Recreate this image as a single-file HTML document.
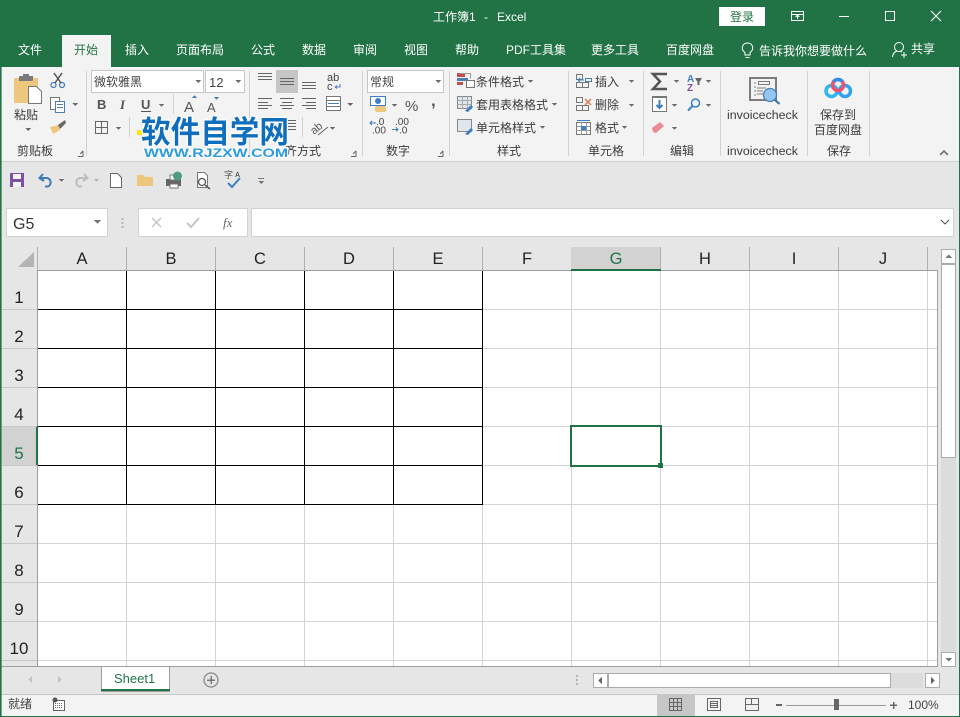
<!DOCTYPE html>
<html><head><meta charset="utf-8"><style>
html,body{margin:0;padding:0;background:#fff;width:960px;height:717px;overflow:hidden}
svg{display:block}
text{font-family:"Liberation Sans","Noto Sans CJK SC",sans-serif;font-size:12px;fill:#3c3c3c}
.t{fill:#fff}
.g{stroke:#d4d4d4;stroke-width:1;fill:none}
.b{stroke:#000;stroke-width:1;fill:none}
.sep{stroke:#d2d2d2;stroke-width:1;fill:none}
.ar{fill:#6a6a6a}
.hd{font-size:16.500px;fill:#222;text-anchor:middle}
.rh{font-size:17px;fill:#222;text-anchor:middle}
.ln{stroke:#666;stroke-width:1;fill:none}
</style></head><body>
<svg width="960" height="717" viewBox="0 0 960 717" xmlns="http://www.w3.org/2000/svg" shape-rendering="crispEdges">
<!-- base -->
<rect width="960" height="717" fill="#e6e6e6"/>
<rect width="960" height="67" fill="#217346"/>
<rect x="0" y="67" width="960" height="94" fill="#f3f3f3"/>
<rect x="0" y="161" width="960" height="1" fill="#d0d0d0"/>
<!-- titlebar -->
<text class="t" x="433" y="21" style="font-size:12px">工作簿1</text>
<text class="t" x="484" y="21">-</text>
<text class="t" x="497" y="21" style="font-size:12px">Excel</text>
<rect x="719" y="7" width="46" height="19" fill="#fff"/>
<text x="742" y="21" text-anchor="middle" style="fill:#217346;font-size:12px">登录</text>
<g fill="none" stroke="#fff" stroke-width="1">
<rect x="791.500" y="11.500" width="12" height="9"/><path d="M792 14.500h11M797.500 19v-3M795.500 17l2-2 2 2"/>
<path d="M839 16.500h10"/><rect x="885.500" y="11.500" width="9" height="9"/>
<path d="M931 11l10 10M941 11l-10 10" shape-rendering="geometricPrecision"/>
</g>
<!-- tabs -->
<rect x="62" y="35" width="49" height="32" fill="#f3f3f3"/>
<g style="font-size:12px">
<text class="t" x="18" y="54">文件</text>
<text x="74" y="54" style="fill:#217346">开始</text>
<text class="t" x="125" y="54">插入</text>
<text class="t" x="176" y="54">页面布局</text>
<text class="t" x="251" y="54">公式</text>
<text class="t" x="302" y="54">数据</text>
<text class="t" x="353" y="54">审阅</text>
<text class="t" x="404" y="54">视图</text>
<text class="t" x="455" y="54">帮助</text>
<text class="t" x="506" y="54">PDF工具集</text>
<text class="t" x="591" y="54">更多工具</text>
<text class="t" x="666" y="54">百度网盘</text>
<text class="t" x="759" y="55">告诉我你想要做什么</text>
<text class="t" x="911" y="53">共享</text>
</g>
<g fill="none" stroke="#fff" stroke-width="1" shape-rendering="geometricPrecision">
<path d="M745 55v-2.500c-5-3.500-2.500-9.500 2.500-9.500s7.500 6 2.500 9.500v2.500zM745.500 57.500h4"/>
<circle cx="899" cy="47" r="4.500"/><path d="M892.500 57c.5-4 3-5.500 4.500-6M900 51l2 1M901 55h6M904 52v6"/>
</g>
<!-- separators -->
<path class="sep" d="M86.500 71v85M249.500 71v85M362.500 71v85M449.500 71v85M568.500 71v85M643.500 71v85M720.500 71v85M807.500 71v85M869.500 71v85M173.500 94v20"/>
<!-- clipboard -->
<g>
<rect x="14" y="78" width="24" height="25" rx="1" fill="#eec77f"/>
<rect x="19" y="76" width="14" height="5" rx="1" fill="#7a7a7a"/><rect x="23" y="74" width="6" height="3" fill="#7a7a7a"/>
<path d="M28.500 86.500h8l5 5v12h-13z" fill="#fff" stroke="#777"/>
<text x="14" y="119">粘贴</text>
<path class="ar" d="M25 128h6l-3 3z"/>
<text x="17" y="155">剪贴板</text>
<g fill="none" stroke="#4a7fb5" stroke-width="1.300" shape-rendering="geometricPrecision">
<circle cx="53.500" cy="85" r="2.500"/><circle cx="62" cy="85" r="2.500"/></g>
<path d="M55 83l7-10M61 83l-7-10" stroke="#555" stroke-width="1.500" fill="none" shape-rendering="geometricPrecision"/>
<rect x="50.500" y="97.500" width="9" height="12" fill="#fff" stroke="#777"/>
<rect x="55.500" y="101.500" width="9" height="11" fill="#fff" stroke="#4a7fb5"/>
<path d="M57 104.500h6M57 107.500h6" stroke="#4a7fb5"/>
<path class="ar" d="M72 103h6l-3 3z"/>
<path d="M50 127l8-2 2 5-7 4z" fill="#eec77f" shape-rendering="geometricPrecision"/>
<path d="M58 125l7-5 1 3-6 6z" fill="#666" shape-rendering="geometricPrecision"/>
<path class="ln" d="M78 156.500h5v-5M80 154l3-3" stroke="#888"/>
</g>
<!-- font -->
<rect x="91.500" y="70.500" width="112" height="22" fill="#fff" stroke="#c6c6c6"/>
<rect x="205.500" y="70.500" width="39" height="22" fill="#fff" stroke="#c6c6c6"/>
<text x="94" y="86" style="font-size:12px;fill:#444">微软雅黑</text>
<text x="209" y="87" style="font-size:13px;fill:#444">12</text>
<path class="ar" d="M195 80h6l-3 3zM235 80h6l-3 3zM159 104h5l-2.500 3z"/>
<text x="97" y="109" style="font-weight:bold;font-size:13px;fill:#555">B</text>
<text x="120" y="109" style="font-style:italic;font-family:'Liberation Serif',serif;font-weight:bold;font-size:13px;fill:#555">I</text>
<text x="141" y="109" style="font-weight:bold;font-size:13px;fill:#555">U</text>
<rect x="141" y="111" width="10" height="1" fill="#555"/>
<text x="184" y="112" style="font-size:15px;fill:#555">A</text><path d="M192 98h5l-2.500-3z" fill="#4a7fb5"/>
<text x="207" y="112" style="font-size:13px;fill:#555">A</text><path d="M214 97h5l-2.500 3z" fill="#4a7fb5"/>
<path d="M95.500 121.500h12v12h-12zM101.500 121.500v12M95.500 127.500h12" fill="none" stroke="#666"/>
<path class="ar" d="M116 127h5l-2.500 3z"/>
<path class="sep" d="M129.500 117v20"/>
<rect x="137" y="130" width="5" height="5" fill="#ffe600"/>
<!-- alignment -->
<rect x="276" y="70" width="22" height="23" fill="#c6c6c6"/>
<path class="ln" d="M258 73.500h14M258 76.500h14M258 79.500h14M280 78.500h14M280 81.500h14M280 84.500h14M302 82.500h14M302 85.500h14M302 88.500h14"/>
<path class="ln" d="M258 98.500h14M258 102.500h10M258 105.500h14M258 108.500h10M280 98.500h14M282 102.500h10M280 105.500h14M282 108.500h10M302 98.500h14M306 102.500h10M302 105.500h14M306 108.500h10"/>
<text x="327" y="81" style="font-size:11px;fill:#444">ab</text><text x="327" y="90" style="font-size:11px;fill:#444">c</text>
<path d="M335 87h5v-3M335 87l2-1.500M335 87l2 1.500" fill="none" stroke="#4a7fb5" shape-rendering="geometricPrecision"/>
<rect x="326.500" y="96.500" width="14" height="14" fill="#fff" stroke="#777"/><path d="M328 103.500h11" stroke="#4a7fb5"/><path d="M326.500 100.500h14M326.500 106.500h14" stroke="#777"/>
<path class="ar" d="M347 103h6l-3 3z"/>
<path class="ln" d="M288 120.500h8M288 123.500h8M288 126.500h8M288 129.500h8"/>
<path class="sep" d="M302.500 117v20"/>
<text x="310" y="132" transform="rotate(-40 316 128)" style="font-size:11px;fill:#555">ab</text>
<path d="M318 135l10-8" stroke="#666" fill="none" shape-rendering="geometricPrecision"/>
<path class="ar" d="M330 127h5l-2.500 3z"/>
<text x="285" y="155">齐方式</text>
<path class="ln" d="M351 156.500h5v-5M353 154l3-3" stroke="#888"/>
<!-- number -->
<rect x="367.500" y="70.500" width="76" height="22" fill="#fff" stroke="#c6c6c6"/>
<text x="370" y="86" style="font-size:12px;fill:#444">常规</text>
<path class="ar" d="M435 80h6l-3 3z"/>
<rect x="370.500" y="96.500" width="15" height="9" fill="#fff" stroke="#3b7fc4"/>
<circle cx="378" cy="101" r="3" fill="#3b7fc4" shape-rendering="geometricPrecision"/>
<rect x="375" y="106" width="11" height="6" rx="2" fill="#eec77f"/>
<path class="ar" d="M392 104h5l-2.500 3z"/>
<text x="405" y="111" style="font-size:15px;fill:#555">%</text>
<text x="431" y="106" style="font-size:17px;font-weight:bold;fill:#555">,</text>
<text x="376" y="125" style="font-size:10px;fill:#444">.0</text><text x="372" y="133.500" style="font-size:10px;fill:#444">.00</text>
<path d="M370 123h6M372 121l-2 2 2 2" stroke="#3b7fc4" fill="none"/>
<text x="395" y="125" style="font-size:10px;fill:#444">.00</text><text x="399" y="133.500" style="font-size:10px;fill:#444">.0</text>
<path d="M392 129.500h6M396 127.500l2 2-2 2" stroke="#3b7fc4" fill="none"/>
<text x="386" y="155">数字</text>
<path class="ln" d="M438 156.500h5v-5M440 154l3-3" stroke="#888"/>
<!-- styles -->
<rect x="457" y="73" width="8" height="4" fill="#c0504d"/><rect x="457" y="78" width="11" height="3" fill="#4a7fb5"/><rect x="457" y="82" width="6" height="3" fill="#c0504d"/>
<rect x="466.500" y="80.500" width="8" height="7" fill="#fff" stroke="#777"/><path d="M459.500 73.500h11v5" fill="none" stroke="#999"/>
<g><rect x="457.500" y="96.500" width="14" height="12" fill="#dfe6ee" stroke="#888"/><path d="M457.500 100.500h14M457.500 104.500h14M462.500 96.500v12M467.500 96.500v12" stroke="#aaa"/><path d="M465 111l6-6 2 2-5 5z" fill="#3b7fc4" shape-rendering="geometricPrecision"/></g>
<g><rect x="457.500" y="119.500" width="14" height="12" fill="#dfe6ee" stroke="#888"/><path d="M465 134l6-6 2 2-5 5z" fill="#3b7fc4" shape-rendering="geometricPrecision"/></g>
<text x="476" y="86">条件格式</text><path class="ar" d="M528 80h5l-2.500 3z"/>
<text x="476" y="109">套用表格格式</text><path class="ar" d="M552 103h5l-2.500 3z"/>
<text x="476" y="132">单元格样式</text><path class="ar" d="M540 126h5l-2.500 3z"/>
<text x="497" y="155">样式</text>
<!-- cells -->
<path d="M576.500 74.500h6v5h-6zM576.500 82.500h6v5h-6zM582.500 82.500h6v5h-6z" fill="none" stroke="#777"/>
<rect x="585.500" y="78.500" width="6" height="3" fill="none" stroke="#4a7fb5"/><path d="M578 80h6M580 78l-2 2 2 2" stroke="#3b7fc4" fill="none"/>
<path d="M576.500 97.500h6v5h-6zM576.500 105.500h6v5h-6zM582.500 105.500h6v5h-6z" fill="none" stroke="#777"/>
<path d="M585 99l6 6M591 99l-6 6" stroke="#e07b53" stroke-width="1.500" shape-rendering="geometricPrecision"/>
<rect x="576.500" y="122.500" width="14" height="12" fill="#fff" stroke="#777"/><path d="M576.500 126.500h14M576.500 130.500h14M581.500 122.500v12M586.500 122.500v12" stroke="#999"/><rect x="581" y="126" width="5" height="4" fill="#3b7fc4"/>
<path d="M577 120.500h13" stroke="#3b7fc4"/>
<text x="595" y="86">插入</text><path class="ar" d="M629 80h5l-2.500 3z"/>
<text x="595" y="109">删除</text><path class="ar" d="M629 104h5l-2.500 3z"/>
<text x="595" y="132">格式</text><path class="ar" d="M622 126h5l-2.500 3z"/>
<text x="588" y="155">单元格</text>
<!-- editing -->
<path d="M667 74h-14l7 7.500-7 7.500h14" fill="none" stroke="#555" stroke-width="2.500" shape-rendering="geometricPrecision"/>
<path class="ar" d="M674 80h5l-2.500 3zM672 104h5l-2.500 3zM672 127h5l-2.500 3zM706 80h5l-2.500 3zM706 104h5l-2.500 3z"/>
<text x="687" y="82" style="font-size:10px;font-weight:bold;fill:#3b7fc4">A</text><text x="687" y="91" style="font-size:10px;font-weight:bold;fill:#7a4fa5">Z</text>
<path d="M695 78h7l-2.500 4v3h-2v-3z" fill="#666"/>
<rect x="652.500" y="96.500" width="14" height="15" fill="#fff" stroke="#777"/><rect x="652" y="96" width="15" height="2" fill="#777"/>
<path d="M659.500 100v8M656.500 105l3 3 3-3" stroke="#3b7fc4" stroke-width="2" fill="none" shape-rendering="geometricPrecision"/>
<g fill="none" stroke="#3b7fc4" stroke-width="1.500" shape-rendering="geometricPrecision"><circle cx="695.500" cy="103" r="4"/><path d="M692.500 106l-4.500 4.500" stroke-width="2"/></g>
<path d="M652 128l8-6 4 4-8 7-3-1z" fill="#e98a96" shape-rendering="geometricPrecision"/>
<text x="670" y="155">编辑</text>
<!-- invoice -->
<rect x="750" y="78" width="26" height="22" fill="#f3f3f3" stroke="#7c7c7c" stroke-width="2"/>
<path d="M755 82v15" stroke="#7c7c7c" stroke-dasharray="2 2"/>
<rect x="758.500" y="81.500" width="11" height="3" fill="none" stroke="#7c7c7c"/><path d="M757 88h9M757 91h6M757 94h7" stroke="#7c7c7c"/>
<g shape-rendering="geometricPrecision"><circle cx="770" cy="95" r="6.500" fill="#94c6f3" stroke="#4a7fb5" stroke-width="1.300"/><path d="M775 100l4.500 4" stroke="#3b6f9f" stroke-width="2"/></g>
<text x="727" y="119" style="font-size:12.400px">invoicecheck</text>
<text x="727" y="155" style="font-size:12.400px">invoicecheck</text>
<!-- baidu -->
<g fill="none" stroke-width="3.500" shape-rendering="geometricPrecision">
<circle cx="831.500" cy="91" r="5.500" stroke="#2fb6ef"/><circle cx="845" cy="91" r="5.500" stroke="#2fa3ef"/><circle cx="838" cy="85" r="5.500" stroke="#f0506e"/>
<path d="M833.500 81.500a6 6 0 0 1 9 0" stroke="#2f8fe0"/></g>
<text x="820" y="119">保存到</text>
<text x="814" y="134">百度网盘</text>
<text x="827" y="155">保存</text>
<path d="M940 155l4-4 4 4" stroke="#777" stroke-width="1.500" fill="none"/>
<!-- QAT -->
<rect x="10" y="173" width="14" height="14" fill="#7d4fa5"/><rect x="13" y="174" width="8" height="5" fill="#f3f3f3"/><rect x="13" y="182" width="8" height="5" fill="#f3f3f3"/>
<g fill="none" shape-rendering="geometricPrecision">
<path d="M43 174l-3.500 4 4.500 3M40 178h7a4.500 4.500 0 0 1 1 8.500h-3" stroke="#3f7ab8" stroke-width="2"/>
<path d="M84 174l3.500 4-4.500 3M87 178h-7a4.500 4.500 0 0 0-1 8.500h3" stroke="#bcbcbc" stroke-width="2"/></g>
<path class="ar" d="M59 179h5l-2.500 3z"/><path d="M94 179h5l-2.500 3z" fill="#b5b5b5"/>
<path d="M110.500 173.500h7l4 4v10h-11z" fill="#fff" stroke="#666"/>
<path d="M137 175h6l2 2h8v9h-16z" fill="#eec77f"/>
<rect x="166" y="179" width="15" height="7" fill="#666"/><rect x="170" y="175" width="8" height="5" fill="#fff" stroke="#777"/><rect x="170" y="184" width="8" height="4" fill="#fff" stroke="#777"/>
<circle cx="177.500" cy="176" r="4.500" fill="#4d9a86" shape-rendering="geometricPrecision"/>
<path d="M197.500 172.500h7l3 3v12h-10z" fill="#fff" stroke="#777"/>
<g shape-rendering="geometricPrecision" fill="none"><circle cx="202" cy="182" r="3.500" stroke="#555" stroke-width="1.300"/><path d="M205 185l5 4" stroke="#555" stroke-width="1.500"/><path d="M228 183l4 4 8-9" stroke="#3b7fc4" stroke-width="2"/></g>
<text x="224" y="178" style="font-size:9px;fill:#555">字</text><text x="235" y="177" style="font-size:7px;fill:#555;font-weight:bold">A</text>
<rect x="258" y="178" width="6" height="1" fill="#777"/><path d="M258 181h6l-3 3z" fill="#777"/>
<!-- formula bar -->
<rect x="6.500" y="208.500" width="101" height="28" fill="#fff" stroke="#d2d2d2"/>
<text x="13" y="229" style="font-size:16px;fill:#333">G5</text>
<path d="M94 220h7l-3.500 4z" fill="#777"/>
<path d="M122.500 218v2M122.500 222v2M122.500 226v2" stroke="#b5b5b5" stroke-width="2"/>
<rect x="138.500" y="208.500" width="109" height="28" fill="#fff" stroke="#d2d2d2"/>
<rect x="251.500" y="208.500" width="702" height="28" fill="#fff" stroke="#d2d2d2"/>
<path d="M152 218l9 9M161 218l-9 9" stroke="#c6c6c6" stroke-width="1.500" fill="none" shape-rendering="geometricPrecision"/>
<path d="M187 223l4 4 8-9" stroke="#c6c6c6" stroke-width="2" fill="none" shape-rendering="geometricPrecision"/>
<text x="223" y="227" style="font-family:'Liberation Serif',serif;font-style:italic;font-size:13px;fill:#666">fx</text>
<path d="M941 220l4 4 4-4" stroke="#555" fill="none" stroke-width="1.300"/>
<!-- sheet -->
<rect x="37" y="270" width="900" height="396" fill="#fff"/>
<path class="g" d="M126.500 270v396M215.500 270v396M304.500 270v396M393.500 270v396M482.500 270v396M571.500 270v396M660.500 270v396M749.500 270v396M838.500 270v396M927.500 270v396"/>
<path class="g" d="M37 309.500h900M37 348.500h900M37 387.500h900M37 426.500h900M37 465.500h900M37 504.500h900M37 543.500h900M37 582.500h900M37 621.500h900M37 660.500h900"/>
<!-- black borders -->
<path class="b" d="M126.500 271v234M215.500 271v234M304.500 271v234M393.500 271v234M482.500 271v234"/>
<path class="b" d="M38 309.500h445M38 348.500h445M38 387.500h445M38 426.500h445M38 465.500h445M38 504.500h445"/>
<!-- col headers -->
<rect x="2" y="247" width="935" height="23" fill="#e6e6e6"/>
<rect x="571" y="247" width="90" height="23" fill="#d2d2d2"/>
<rect x="2" y="270" width="35" height="396" fill="#e6e6e6"/>
<rect x="2" y="426" width="35" height="39" fill="#d2d2d2"/>
<path d="M37.500 247v23M126.500 247v23M215.500 247v23M304.500 247v23M393.500 247v23M482.500 247v23M660.500 247v23M749.500 247v23M838.500 247v23M927.500 247v23" stroke="#b0b0b0"/>
<rect x="37" y="270" width="900" height="1" fill="#9e9e9e"/>
<rect x="571" y="269" width="90" height="2" fill="#217346"/>
<rect x="37" y="270" width="1" height="396" fill="#9e9e9e"/>
<rect x="36" y="426" width="2" height="39" fill="#217346"/>
<rect x="937" y="270" width="1" height="397" fill="#9e9e9e"/>
<path d="M18 267h16v-15z" fill="#b4b4b4"/>
<path d="M2 309.500h35M2 348.500h35M2 387.500h35M2 426.500h35M2 465.500h35M2 504.500h35M2 543.500h35M2 582.500h35M2 621.500h35M2 660.500h35" stroke="#c8c8c8"/>
<text class="hd" x="82" y="264">A</text><text class="hd" x="171" y="264">B</text><text class="hd" x="260" y="264">C</text><text class="hd" x="349" y="264">D</text><text class="hd" x="438" y="264">E</text><text class="hd" x="527" y="264">F</text><text class="hd" x="616" y="264" style="fill:#217346">G</text><text class="hd" x="705" y="264">H</text><text class="hd" x="794" y="264">I</text><text class="hd" x="883" y="264">J</text>
<text class="rh" x="19" y="303">1</text><text class="rh" x="19" y="342">2</text><text class="rh" x="19" y="381">3</text><text class="rh" x="19" y="420">4</text><text class="rh" x="19" y="459" style="fill:#217346">5</text><text class="rh" x="19" y="498">6</text><text class="rh" x="19" y="537">7</text><text class="rh" x="19" y="576">8</text><text class="rh" x="19" y="615">9</text><text class="rh" x="19" y="654">10</text>
<!-- selection -->
<rect x="571" y="426" width="90" height="40" fill="none" stroke="#217346" stroke-width="2"/>
<rect x="658" y="463" width="5" height="5" fill="#217346"/>
<!-- vscroll -->
<rect x="941.500" y="249.500" width="14" height="14" fill="#fff" stroke="#ababab"/>
<path d="M945 258l3.500-3.500 3.500 3.500z" fill="#777"/>
<rect x="941.500" y="264.500" width="14" height="193" fill="#fff" stroke="#ababab"/>
<rect x="941" y="458" width="15" height="194" fill="#dcdcdc"/>
<rect x="941.500" y="652.500" width="14" height="14" fill="#fff" stroke="#ababab"/>
<path d="M945 658l3.500 3.500 3.500-3.500z" fill="#777"/>
<!-- tab bar -->
<rect x="0" y="666" width="938" height="1" fill="#9e9e9e"/>
<rect x="101.500" y="666.500" width="68" height="25" fill="#fff" stroke="#9e9e9e"/>
<rect x="101" y="689" width="69" height="2" fill="#217346"/>
<text x="114" y="683" style="font-size:13px;fill:#217346">Sheet1</text>
<path d="M28 679.500l4-3.500v7zM58 676l4 3.500-4 3.500z" fill="#c4c4c4"/>
<circle cx="211" cy="680" r="7" fill="none" stroke="#8a8a8a" stroke-width="1.300" shape-rendering="geometricPrecision"/>
<path d="M207 680h8M211 676v8" stroke="#777" stroke-width="1.500"/>
<path d="M577 675v2M577 679v2M577 683v2" stroke="#b5b5b5" stroke-width="2"/>
<rect x="593.500" y="673.500" width="14" height="14" fill="#fff" stroke="#ababab"/>
<path d="M602 677v7l-4-3.500z" fill="#666"/>
<rect x="608.500" y="673.500" width="282" height="14" fill="#fff" stroke="#ababab"/>
<rect x="891" y="673" width="32" height="15" fill="#dcdcdc"/>
<rect x="925.500" y="673.500" width="14" height="14" fill="#fff" stroke="#ababab"/>
<path d="M931 677v7l4-3.500z" fill="#666"/>
<!-- status bar -->
<rect x="0" y="694" width="960" height="1" fill="#c6c6c6"/>
<rect x="0" y="695" width="960" height="21" fill="#f3f3f3"/>
<text x="8" y="708" style="font-size:12px;fill:#444">就绪</text>
<rect x="53.500" y="700.500" width="11" height="10" fill="#fff" stroke="#666"/><circle cx="55" cy="700" r="2.500" fill="#555" shape-rendering="geometricPrecision"/><path d="M55 703.500h8M55 705.500h8M55 707.500h8" stroke="#666" stroke-dasharray="1 1"/>
<rect x="657" y="695" width="38" height="21" fill="#c6c6c6"/>
<path d="M669.500 698.500h12v12h-12zM669.500 702.500h12M669.500 706.500h12M673.500 698.500v12M677.500 698.500v12" fill="none" stroke="#666"/>
<path d="M707.500 698.500h13v12h-13zM710.500 701.500h7v6h-7zM711 703.500h6M711 705.500h6" fill="none" stroke="#666"/>
<path d="M745.500 698.500h13v12h-13zM745.500 704.500h6v-6M751.500 704.500h7" fill="none" stroke="#666"/>
<rect x="776" y="704" width="6" height="2" fill="#666"/>
<rect x="786" y="705" width="100" height="1" fill="#9a9a9a"/>
<rect x="834" y="699" width="5" height="11" fill="#666"/>
<path d="M890 705h7M893.500 702v7" stroke="#666" stroke-width="1.500"/>
<text x="908" y="709" style="font-size:12px;fill:#444">100%</text>
<!-- window border -->
<rect x="0" y="67" width="1" height="650" fill="#217346"/><rect x="1" y="67" width="1" height="650" fill="#217346" opacity=".6"/>
<rect x="959" y="67" width="1" height="650" fill="#217346"/>
<rect x="0" y="716" width="960" height="1" fill="#217346"/>
<!-- watermark -->
<g shape-rendering="geometricPrecision">
<text x="141" y="143" textLength="148" lengthAdjust="spacingAndGlyphs" style="font-size:31px;font-weight:bold;fill:#0f6fbd;stroke:#fff;stroke-width:2.500px;paint-order:stroke;stroke-linejoin:round;font-family:'Noto Sans CJK SC',sans-serif">软件自学网</text>
<text x="144" y="157" textLength="144" lengthAdjust="spacingAndGlyphs" style="font-size:12px;font-weight:bold;fill:#2b9be0;stroke:#fff;stroke-width:2px;paint-order:stroke;stroke-linejoin:round">WWW.RJZXW.COM</text>
</g>
</svg>
</body></html>
